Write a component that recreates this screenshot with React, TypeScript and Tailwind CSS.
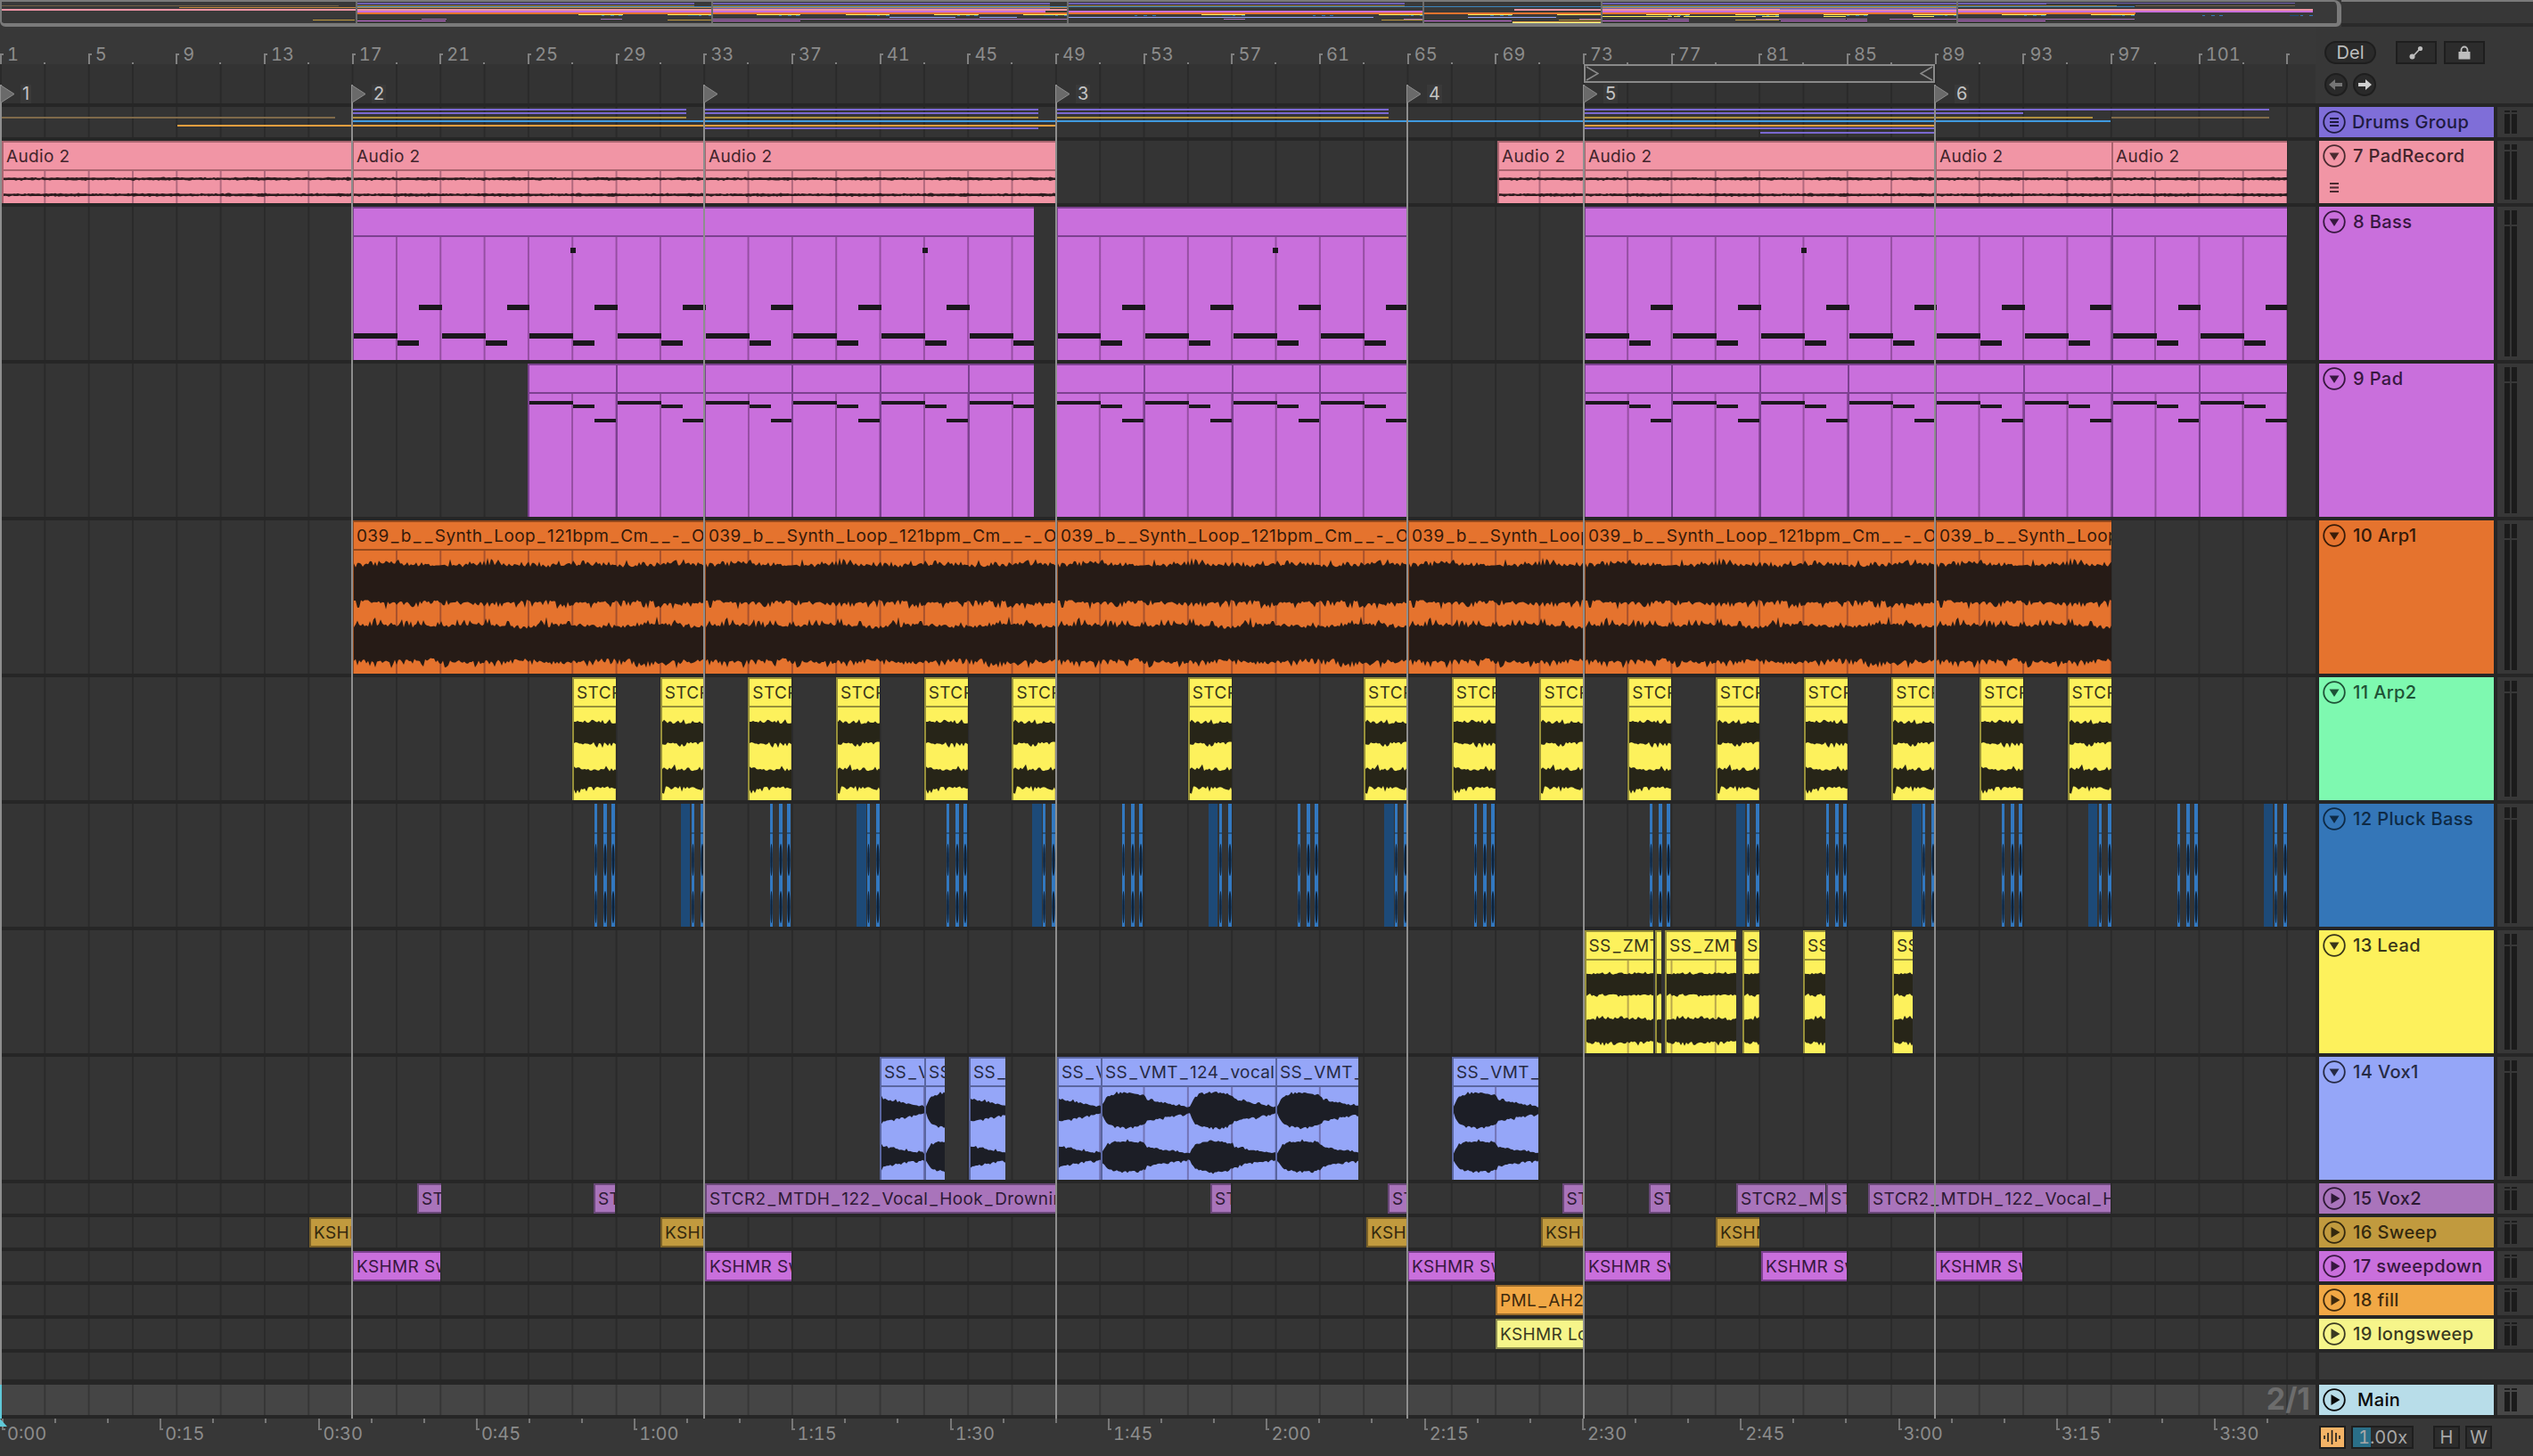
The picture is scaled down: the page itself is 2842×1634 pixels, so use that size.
import { ReactNode } from "react";

const FOUR = 98.68;
const LANE_LINES = "bg-[linear-gradient(90deg,#2a2a2a_2px,transparent_2px)] bg-[size:49.33px_100%]";
const CLIP_LINES = "bg-[linear-gradient(90deg,rgba(40,10,40,0.32)_2px,transparent_2px)] bg-[size:49.33px_100%]";

type Theme = { bg: string; edge: string; text: string; stroke: string; wave: string };

const pink: Theme = { bg: "bg-[#f195a5]", edge: "border-[#a9646f]", text: "text-[#41242b]", stroke: "#4a2a30", wave: "#2c1c1e" };
const purple: Theme = { bg: "bg-[#c96fdc]", edge: "border-[#7c4190]", text: "text-[#37173f]", stroke: "#37173f", wave: "#1b171d" };
const orange: Theme = { bg: "bg-[#e5732e]", edge: "border-[#964a1c]", text: "text-[#33190a]", stroke: "#3a1c08", wave: "#261b16" };
const green: Theme = { bg: "bg-[#7ef9b0]", edge: "border-[#4f9c6e]", text: "text-[#1e5236]", stroke: "#1e5236", wave: "#1c2a22" };
const yellow: Theme = { bg: "bg-[#fdf15c]", edge: "border-[#97903a]", text: "text-[#38351a]", stroke: "#38351a", wave: "#272518" };
const blue: Theme = { bg: "bg-[#3476b8]", edge: "border-[#23527f]", text: "text-[#0e2a45]", stroke: "#0e2a45", wave: "#0f2238" };
const peri: Theme = { bg: "bg-[#95a6f8]", edge: "border-[#5a66a0]", text: "text-[#262a44]", stroke: "#262a44", wave: "#1c1e26" };
const vox2: Theme = { bg: "bg-[#a974bb]", edge: "border-[#694878]", text: "text-[#2e1a35]", stroke: "#2e1a35", wave: "#000" };
const gold: Theme = { bg: "bg-[#c19a3e]", edge: "border-[#7a6128]", text: "text-[#33280e]", stroke: "#33280e", wave: "#000" };
const fill: Theme = { bg: "bg-[#f1a845]", edge: "border-[#9a6b2b]", text: "text-[#3e2a0e]", stroke: "#3e2a0e", wave: "#000" };
const pale: Theme = { bg: "bg-[#f6f58a]", edge: "border-[#8f8f50]", text: "text-[#3a3a22]", stroke: "#3a3a22", wave: "#000" };
const groupT: Theme = { bg: "bg-[#7f6ed8]", edge: "border-[#564a96]", text: "text-[#1e1a40]", stroke: "#1e1a40", wave: "#000" };
const mainT: Theme = { bg: "bg-[#b8dde9]", edge: "border-[#7c9aa4]", text: "text-[#0a0a0a]", stroke: "#0a0a0a", wave: "#000" };

function rng(seed: number) {
  let a = seed * 2654435761;
  return () => {
    a |= 0;
    a = (a + 0x6d2b79f5) | 0;
    let t = Math.imul(a ^ (a >>> 15), 1 | a);
    t = (t + Math.imul(t ^ (t >>> 7), 61 | t)) ^ t;
    return ((t ^ (t >>> 14)) >>> 0) / 4294967296;
  };
}

// one audio channel as a closed outline
function band(w: number, cy: number, half: (x: number) => number, spike: number, seed: number) {
  const r = rng(seed);
  const top: string[] = [];
  const bot: string[] = [];
  for (let x = 0; x <= w + 2; x += 2) {
    const h = half(x) + Math.sin(x * 0.06 + seed) * spike * 0.15;
    top.push(`${x} ${(cy - h - (r() - 0.5) * spike * 0.5 - r() ** 4 * spike).toFixed(1)}`);
    bot.unshift(`${x} ${(cy + h + (r() - 0.5) * spike * 0.5 + r() ** 4 * spike).toFixed(1)}`);
  }
  return `M${top.join("L")}L${bot.join("L")}Z`;
}

function Wave({ color, d }: { color: string; d: string }) {
  return (
    <svg className="absolute left-0 top-0 h-full w-full">
      <path d={d} fill={color} />
    </svg>
  );
}

type ClipData = { x: number; w: number; label?: string; draw?: (x: number, w: number) => ReactNode; dim?: boolean };

type Track = {
  name: string;
  t: Theme;
  head?: Theme;
  h: number;
  seg: number;
  icon: "down" | "play" | "group";
  clips: ClipData[];
  ovY: number;
  ovH: number;
  sliver?: boolean;
};

const pinkWave = (_x: number, w: number) => (
  <Wave color={pink.wave} d={band(w, 8.7, () => 1.2, 0.9, 3) + band(w, 26.7, () => 1.2, 0.9, 4)} />
);
const orangeWave = (_x: number, w: number) => (
  <Wave color={orange.wave} d={band(w, 37, () => 20.5, 7, 5) + band(w, 104, () => 19.5, 8, 6)} />
);
const arpWave = (x: number, w: number) => {
  const s = Math.round((x - 642) / FOUR) % 2;
  return <Wave color={yellow.wave} d={band(w, 28.5, () => 11, 5, 7 + s) + band(w, 80, () => 10.5, 7, 9 + s)} />;
};
const leadWave = (_x: number, w: number) => (
  <Wave color={yellow.wave} d={band(w, 26.5, () => 11.5, 4, 11) + band(w, 78.5, () => 12.5, 4, 12)} />
);
const voxHalf = (clipX: number, k: number) => (x: number) => {
  const p = (((clipX + x - 1037.6) % FOUR) + FOUR) % FOUR;
  if (p < 6) return (6 + p * 1.6) * k;
  if (p < 49) return (15 + 4 * Math.sin((Math.PI * (p - 6)) / 43)) * k;
  return (9 * (1 - (p - 49) / 49.7) + 3) * k;
};
const voxWave = (x: number, w: number) => (
  <Wave color={peri.wave} d={band(w, 26, voxHalf(x, 1), 2.6, 13) + band(w, 78, voxHalf(x, 0.88), 2.6, 14)} />
);

function bassNotes(x: number, w: number) {
  const out: ReactNode[] = [];
  for (let k = 0; k < 22; k++) {
    const g = 395 + k * FOUR;
    const parts = [
      [g, 49, 108],
      [g + 49, 24, 116],
      [g + 73, 25.7, 76],
    ];
    parts.forEach(([nx, nw, ny], i) => {
      if (nx + nw <= x || nx >= x + w) return;
      out.push(<Note key={`${k}-${i}`} x={nx - x} w={nw} y={ny} h={6} />);
    });
  }
  [638, 1033, 1426, 2019].forEach((nx) => {
    if (nx >= x && nx < x + w) out.push(<Note key={nx} x={nx - x} w={6} y={12} h={6} />);
  });
  return out;
}

const padNotes = () => (
  <>
    <Note x={0} w={49} y={8} h={4} />
    <Note x={49} w={24} y={12} h={4} />
    <Note x={73} w={25.7} y={28} h={4} />
  </>
);

function Note({ x, w, y, h }: { x: number; w: number; y: number; h: number }) {
  return <div className="absolute bg-[#1b171d]" style={{ left: x, width: w, top: y, height: h }} />;
}

const padClips: ClipData[] = [];
[592.2, 690.9, 789.6, 888.2, 986.9, 1085.6, 1184.4, 1283.1, 1381.8, 1480.4].forEach((x) => {
  padClips.push({ x, w: x === 1085.6 ? 74.4 : FOUR, draw: padNotes });
});
for (let k = 0; k < 8; k++) padClips.push({ x: 1776.5 + k * FOUR, w: FOUR, draw: padNotes });

const arpClips: ClipData[] = [0, 1, 2, 3, 4, 5, 7, 9, 10, 11, 12, 13, 14, 15, 16, 17].map((k) => ({
  x: 642 + k * FOUR,
  w: 49,
  label: "STCR2_MTDH",
  draw: arpWave,
}));

const pluckClips: ClipData[] = [];
for (let k = 0; k < 20; k++) {
  if (k === 11) continue;
  const g = 667 + k * FOUR;
  if (k % 2 === 0) {
    pluckClips.push({ x: g, w: 3 }, { x: g + 10, w: 4 }, { x: g + 19, w: 4 });
  } else {
    pluckClips.push({ x: g - 2, w: 10.5, dim: true }, { x: g + 10, w: 3 }, { x: g + 20, w: 4 });
  }
}

const synth = "039_b__Synth_Loop_121bpm_Cm__-_O";

const tracks: Track[] = [
  {
    name: "7 PadRecord", t: pink, h: 70, seg: 6, icon: "down", ovY: 10, ovH: 1.5,
    clips: [[2, 393], [395, 395], [790, 395], [1680, 97], [1777, 394], [2171, 198], [2369, 197]].map(([x, w]) => ({ x, w, label: "Audio 2", draw: pinkWave })),
  },
  {
    name: "8 Bass", t: purple, h: 172, seg: 16, icon: "down", ovY: 12, ovH: 1.5,
    clips: [[395, 765], [1185, 394], [1777, 592], [2369, 197]].map(([x, w]) => ({ x, w, draw: bassNotes })),
  },
  { name: "9 Pad", t: purple, h: 172, seg: 16, icon: "down", ovY: 13, ovH: 1, clips: padClips },
  {
    name: "10 Arp1", t: orange, h: 172, seg: 16, icon: "down", ovY: 14, ovH: 2,
    clips: [[395, 395], [790, 395], [1185, 394], [1579, 198], [1777, 394], [2171, 198]].map(([x, w]) => ({ x, w, label: synth, draw: orangeWave })),
  },
  { name: "11 Arp2", t: yellow, head: green, h: 138, seg: 12, icon: "down", ovY: 16, ovH: 1, clips: arpClips },
  { name: "12 Pluck Bass", t: blue, h: 138, seg: 12, icon: "down", ovY: 17, ovH: 1, clips: pluckClips, sliver: true },
  {
    name: "13 Lead", t: yellow, h: 138, seg: 12, icon: "down", ovY: 18, ovH: 1,
    clips: [
      { x: 1777.5, w: 77.5, label: "SS_ZMT_" },
      { x: 1857, w: 7 },
      { x: 1868, w: 80, label: "SS_ZMT_" },
      { x: 1955, w: 19, label: "SS" },
      { x: 2023, w: 25, label: "SS_" },
      { x: 2123, w: 23, label: "SS" },
    ].map((c) => ({ ...c, draw: leadWave })),
  },
  {
    name: "14 Vox1", t: peri, h: 138, seg: 12, icon: "down", ovY: 19, ovH: 1,
    clips: [
      { x: 987, w: 50, label: "SS_VMT" },
      { x: 1037, w: 23, label: "SS_V" },
      { x: 1087, w: 41, label: "SS_VMT" },
      { x: 1186, w: 49, label: "SS_VMT" },
      { x: 1235, w: 196, label: "SS_VMT_124_vocal_" },
      { x: 1431, w: 93, label: "SS_VMT_124" },
      { x: 1629, w: 97, label: "SS_VMT_124" },
    ].map((c) => ({ ...c, draw: voxWave })),
  },
  {
    name: "15 Vox2", t: vox2, h: 34, seg: 2, icon: "play", ovY: 20.5, ovH: 1,
    clips: [
      { x: 468, w: 27, label: "STCR2" },
      { x: 666, w: 24, label: "STCR2" },
      { x: 791, w: 394, label: "STCR2_MTDH_122_Vocal_Hook_Drowning" },
      { x: 1358, w: 23, label: "STCR2" },
      { x: 1557, w: 22, label: "STCR2" },
      { x: 1752.5, w: 24, label: "STCR2" },
      { x: 1850, w: 24, label: "STCR2" },
      { x: 1948, w: 100, label: "STCR2_MTDH" },
      { x: 2049, w: 23, label: "STCR2" },
      { x: 2096, w: 272, label: "STCR2_MTDH_122_Vocal_Hook_Drowning" },
    ],
  },
  {
    name: "16 Sweep", t: gold, h: 34, seg: 2, icon: "play", ovY: 21.5, ovH: 1,
    clips: [[347, 47], [741, 49], [1533, 46], [1729, 48], [1925, 49]].map(([x, w]) => ({ x, w, label: "KSHMR Sweep" })),
  },
  {
    name: "17 sweepdown", t: purple, h: 34, seg: 2, icon: "play", ovY: 22.5, ovH: 1,
    clips: [[395, 99], [791, 97], [1579, 98], [1777, 97], [1976, 96], [2171, 98]].map(([x, w]) => ({ x, w, label: "KSHMR Sweep" })),
  },
  { name: "18 fill", t: fill, h: 34, seg: 2, icon: "play", ovY: 23.5, ovH: 1, clips: [{ x: 1678, w: 99, label: "PML_AH2" }] },
  { name: "19 longsweep", t: pale, h: 34, seg: 2, icon: "play", ovY: 24.5, ovH: 1, clips: [{ x: 1678, w: 99, label: "KSHMR Loop" }] },
];

type GroupLine = { x: number; w: number; y: number; c: string };
const P = "bg-[#7a68d0]";
const G = "bg-[#b08f3e]";
const B = "bg-[#3f9ae0]";
const O = "bg-[#ef9f3f]";
const D = "bg-[#7f6a4a]";
const groupLines: GroupLine[] = [
  { x: 2, w: 374, y: 11, c: D },
  { x: 199, w: 986, y: 19.5, c: O },
  { x: 395, w: 1973, y: 15, c: B },
  { x: 1777, w: 393, y: 19.5, c: O },
  { x: 791, w: 374, y: 23, c: P },
  { x: 1777, w: 393, y: 23, c: P },
  { x: 1975, w: 195, y: 28, c: P },
  { x: 2171, w: 375, y: 2, c: P },
  { x: 2171, w: 99, y: 6, c: P },
  { x: 2171, w: 177, y: 11, c: G },
  { x: 2369, w: 177, y: 11, c: D },
];
[[395, 375], [791, 374], [1185, 373], [1777, 393]].forEach(([x, w]) => {
  groupLines.push({ x, w, y: 2, c: P }, { x, w, y: 6, c: P }, { x, w, y: 11, c: G });
});

function TrackIcon({ kind, color }: { kind: Track["icon"]; color: string }) {
  return (
    <svg width="26" height="26" viewBox="0 0 26 26" className="shrink-0">
      <circle cx="13" cy="13" r="11.8" fill="none" stroke={color} strokeWidth="1.8" />
      {kind === "down" && <path d="M7.5 9.5h11L13 18z" fill={color} />}
      {kind === "play" && <path d="M9.5 7l10 6-10 6z" fill={color} />}
      {kind === "group" && <path d="M8 8h10v2H8zM8 12h10v2H8zM8 16h10v2H8z" fill={color} />}
    </svg>
  );
}

function Meter({ seg, main }: { seg: number; main?: boolean }) {
  const bar = (
    <div className="flex h-full w-[6px] flex-col gap-[2px]">
      <div className="shrink-0 bg-[#1b1b1b]" style={{ height: seg }} />
      <div className="grow bg-[#1b1b1b]" />
    </div>
  );
  return (
    <div className={`flex w-[40px] gap-[2px] py-[4px] pl-[8px] ${main ? "bg-[#474747]" : "bg-[#373737]"}`}>
      {bar}
      {bar}
    </div>
  );
}

function TrackHead({ name, t, icon, gap = "gap-[8px]" }: { name: string; t: Theme; icon: Track["icon"]; gap?: string }) {
  return (
    <div className={`flex h-[34px] items-center pl-[4px] text-[20px] font-medium tracking-[0.02em] ${gap} ${t.text}`}>
      <TrackIcon kind={icon} color={t.stroke} />
      <span>{name}</span>
    </div>
  );
}

// underscores in the clip font run wider than Inter's
function ClipLabel({ text }: { text: string }) {
  return (
    <span>
      {text.split("_").map((part, i) => (
        <span key={i}>
          {i > 0 && <span className="mx-[2px]">_</span>}
          {part}
        </span>
      ))}
    </span>
  );
}

function Clip({ c, t, tall }: { c: ClipData; t: Theme; tall: boolean }) {
  return (
    <div className={`absolute inset-y-0 flex flex-col overflow-hidden ${t.bg}`} style={{ left: c.x, width: c.w }}>
      <div className={`flex h-[34px] shrink-0 items-center overflow-hidden whitespace-nowrap border-y-2 border-l-2 pl-[3px] pt-[1px] text-[19px] leading-none tracking-[0.02em] ${t.edge} ${t.text}`}>
        {c.label && <ClipLabel text={c.label} />}
      </div>
      {tall && (
        <div className={`relative grow overflow-hidden border-l-2 bg-origin-border ${CLIP_LINES} ${t.edge}`} style={{ backgroundPositionX: -c.x }}>
          {c.draw && c.draw(c.x, c.w)}
        </div>
      )}
    </div>
  );
}

function Sliver({ c }: { c: ClipData }) {
  return (
    <div className={`absolute inset-y-0 overflow-hidden ${c.dim ? "bg-[#1d4a78]" : "bg-[#3278c0]"}`} style={{ left: c.x, width: c.w }}>
      {!c.dim && (
        <svg className="absolute left-0 top-0 h-full w-full">
          <rect x="0" y="32" width={c.w} height="2" fill="#23527f" />
          <ellipse cx={c.w / 2} cy="63" rx={c.w * 0.42} ry="18" fill="#0f2238" />
          <ellipse cx={c.w / 2} cy="116" rx={c.w * 0.42} ry="18" fill="#0f2238" />
        </svg>
      )}
    </div>
  );
}

function TrackRow({ track }: { track: Track }) {
  const head = track.head ?? track.t;
  return (
    <div className="flex gap-[4px]" style={{ height: track.h }}>
      <div className={`relative w-[2598px] bg-[#343434] ${LANE_LINES}`}>
        {track.clips.map((c, i) =>
          track.sliver ? <Sliver key={i} c={c} /> : <Clip key={i} c={c} t={track.t} tall={track.h > 34} />
        )}
      </div>
      <div className={`relative w-[196px] ${head.bg}`}>
        <TrackHead name={track.name} t={head} icon={track.icon} />
        {track.name === "7 PadRecord" && (
          <svg width="10" height="12" viewBox="0 0 10 12" className="absolute left-[12px] top-[47px]">
            <path d="M0 0h10v2H0zM0 4.500h10v2H0zM0 9h10v2H0z" fill={head.stroke} />
          </svg>
        )}
      </div>
      <Meter seg={track.seg} />
    </div>
  );
}

function Overview() {
  const s = 1.0113;
  return (
    <div className="flex h-[30px] shrink-0">
      <div className="relative h-full w-[2627px] overflow-hidden rounded-b-[6px] rounded-r-[8px] border-2 border-b-4 border-r-[5px] border-[#7a7a7a] bg-[#393939]">
        {tracks.map((tr) =>
          tr.clips.map((c, i) => (
            <div key={i} className={`absolute ${c.dim ? "bg-[#1d4a78]" : tr.t.bg}`} style={{ left: c.x * s - 2, width: c.w * s, top: tr.ovY - 2, height: tr.ovH }} />
          ))
        )}
        {groupLines.map((l, i) => (
          <div key={i} className={`absolute opacity-80 ${l.c}`} style={{ left: l.x * s - 2, width: l.w * s, top: 1 + l.y * 0.24, height: 1 }} />
        ))}
        {[399, 798, 1197, 1596, 1796, 2195].map((x) => (
          <div key={x} className="absolute inset-y-0 w-[2px] bg-[#6c6c6c]" style={{ left: x - 2 }} />
        ))}
      </div>
      <div className="grow border-b-4 border-t-2 border-b-[#2a2a2a] border-t-[#7a7a7a]" />
    </div>
  );
}

function Ruler() {
  const cells = [];
  for (let k = 0; k < 27; k++) {
    const n = 1 + k * 4;
    cells.push(
      <div key={k} className="relative h-full w-[98.68px] shrink-0">
        <div className="absolute bottom-0 left-0 h-[12px] w-[4px] border-l-2 border-t-2 border-[#808080]" />
        <div className="absolute bottom-0 left-[49px] h-[2px] w-[2px] bg-[#808080]" />
        {k < 26 && <span className="absolute left-[8px] top-[21px] text-[20px] leading-[20px] tabular-nums text-[#8c8c8c]">{n}</span>}
      </div>
    );
  }
  return <div className="flex h-[42px] w-[2598px] overflow-hidden bg-[#383838]">{cells}</div>;
}

function Locator({ x, label }: { x: number; label?: string }) {
  return (
    <div className="pointer-events-none absolute bottom-[42px] top-[95px] z-10 w-[2px] bg-[#8e8e8e]" style={{ left: x }}>
      <svg width="17" height="21" viewBox="0 0 17 21" className="absolute left-0 top-0">
        <path d="M0.500 0.500L16 10.500 0.500 20.500z" fill="#6a6a6a" stroke="#8e8e8e" />
      </svg>
      {label && <span className="absolute left-[23px] top-0 bg-[#393939] px-[2px] text-[20px] leading-[21px] text-[#c4c4c4]">{label}</span>}
    </div>
  );
}

function TopControls() {
  return (
    <div className="flex w-[244px] flex-col gap-[10px] bg-[#373737] pl-[10px] pt-[16px]">
      <div className="flex h-[26px]">
        <div className="flex w-[58px] items-center justify-center rounded-full border-2 border-[#1e1e1e] bg-[#2a2a2a] text-[20px] text-[#bdbdbd]">Del</div>
        <div className="ml-[22px] flex w-[46px] items-center justify-center border-2 border-[#1e1e1e] bg-[#2c2c2c]">
          <svg width="16" height="16" viewBox="0 0 16 16">
            <path d="M4 12.500L12.500 3.500" stroke="#bdbdbd" strokeWidth="1.8" />
            <circle cx="3.500" cy="12.500" r="3" fill="#bdbdbd" />
            <circle cx="12.500" cy="3.500" r="2.600" fill="#bdbdbd" />
          </svg>
        </div>
        <div className="ml-[8px] flex w-[46px] items-center justify-center border-2 border-[#1e1e1e] bg-[#2c2c2c]">
          <svg width="16" height="16" viewBox="0 0 16 16">
            <path d="M4.500 7V5a3.500 3.500 0 0 1 7 0v2" fill="none" stroke="#bdbdbd" strokeWidth="1.8" />
            <rect x="1.500" y="7" width="13" height="8.500" fill="#bdbdbd" />
          </svg>
        </div>
      </div>
      <div className="flex h-[26px] gap-[6px]">
        <div className="flex w-[26px] items-center justify-center rounded-full border-2 border-[#1e1e1e] bg-[#2a2a2a]">
          <svg width="16" height="14" viewBox="0 0 16 14"><path d="M0 7l7-6v4h8v4H7v4z" fill="#757575" /></svg>
        </div>
        <div className="flex w-[26px] items-center justify-center rounded-full border-2 border-[#1e1e1e] bg-[#2a2a2a]">
          <svg width="16" height="14" viewBox="0 0 16 14"><path d="M16 7L9 1v4H1v4h8v4z" fill="#d0d0d0" /></svg>
        </div>
      </div>
    </div>
  );
}

function BottomBar() {
  const cells = [];
  for (let k = 0; k < 15; k++) {
    const m = Math.floor((k * 15) / 60);
    const sec = (k * 15) % 60;
    cells.push(
      <div key={k} className="relative h-full w-[177.3px] shrink-0">
        <div className="absolute left-0 top-0 h-[13px] w-[4px] border-b-2 border-l-2 border-[#777777]" />
        <div className="absolute left-[59px] top-0 h-[5px] w-[2px] bg-[#777777]" />
        <div className="absolute left-[118px] top-0 h-[5px] w-[2px] bg-[#777777]" />
        <span className="absolute left-[6px] top-[6px] text-[20px] leading-[22px] tabular-nums text-[#8c8c8c]">{`${m}:${sec === 0 ? "00" : sec}`}</span>
      </div>
    );
  }
  return (
    <div className="flex h-[42px] grow bg-[#373737]">
      <div className="relative flex w-[2602px] overflow-hidden rounded-bl-[8px] pl-[2px]">
        {cells}
        <svg width="8" height="9" viewBox="0 0 8 9" className="absolute left-0 top-0">
          <path d="M0 0l8 9H0z" fill="#5fc9d9" />
        </svg>
      </div>
      <div className="flex items-start pt-[8px]">
        <div className="flex h-[26px] w-[30px] items-center justify-center border-2 border-[#1e1e1e] bg-[#f3b366]">
          <svg width="20" height="16" viewBox="0 0 20 16">
            <path d="M1 6v4M5 3v10M9.500 0v16M14 3v10M18 6v4" stroke="#1b1b1b" strokeWidth="1.6" />
          </svg>
        </div>
        <div className="relative ml-[6px] flex h-[26px] w-[70px] items-center border-2 border-[#1e1e1e] bg-[#2c2c2c] pl-[6px] text-[20px] tabular-nums text-[#a8a8a8]">
          <div className="absolute inset-y-0 left-0 w-[20px] bg-[#2a6f88]" />
          <span className="relative">1.00x</span>
        </div>
        <div className="ml-[22px] flex h-[26px] w-[30px] items-center justify-center border-2 border-[#1e1e1e] bg-[#2c2c2c] text-[20px] text-[#a8a8a8]">H</div>
        <div className="ml-[6px] flex h-[26px] w-[30px] items-center justify-center border-2 border-[#1e1e1e] bg-[#2c2c2c] text-[20px] text-[#a8a8a8]">W</div>
      </div>
    </div>
  );
}

export default function App() {
  return (
    <div className="relative flex h-[1634px] w-[2842px] flex-col overflow-hidden bg-[#373737] font-['Inter',sans-serif]">
      <Overview />

      <div className="flex h-[86px] shrink-0 bg-[#373737]">
        <div className="relative w-[2598px]">
          <Ruler />
          <div className={`relative h-[44px] bg-[#333333] ${LANE_LINES}`}>
            <div className="absolute left-[1776.5px] top-0 h-[21px] w-[394px] border-2 border-[#8a8a8a] bg-[#353535]">
              <svg width="15" height="17" viewBox="0 0 15 17" className="absolute left-0 top-0">
                <path d="M1 1l13 7.500L1 16" fill="none" stroke="#8a8a8a" strokeWidth="1.6" />
              </svg>
              <svg width="15" height="17" viewBox="0 0 15 17" className="absolute right-0 top-0">
                <path d="M14 1L1 8.500 14 16" fill="none" stroke="#8a8a8a" strokeWidth="1.6" />
              </svg>
            </div>
          </div>
        </div>
        <TopControls />
      </div>

      <div className="flex grow flex-col gap-[4px] bg-[#262626] pt-[4px]">
        <div className="flex h-[34px] gap-[4px]">
          <div className={`relative w-[2598px] bg-[#343434] ${LANE_LINES}`}>
            {groupLines.map((l, i) => (
              <div key={i} className={`absolute h-[2px] ${l.c}`} style={{ left: l.x, width: l.w, top: l.y }} />
            ))}
          </div>
          <div className={`w-[196px] ${groupT.bg}`}>
            <TrackHead name="Drums Group" t={groupT} icon="group" gap="gap-[7px]" />
          </div>
          <Meter seg={2} />
        </div>

        {tracks.map((tr) => (
          <TrackRow key={tr.name} track={tr} />
        ))}

        <div className="flex h-[30px] gap-[4px]">
          <div className={`w-[2598px] bg-[#343434] ${LANE_LINES}`} />
          <div className="grow bg-[#373737]" />
        </div>

        <div className="mt-[2px] flex h-[34px] gap-[4px]">
          <div className="relative w-[2598px] bg-[#454545] bg-[linear-gradient(90deg,#363636_2px,transparent_2px)] bg-[size:49.33px_100%]">
            <span className="absolute right-[6px] top-[-2px] text-[34px] font-bold leading-[36px] text-[#6c6c6c]">2/1</span>
          </div>
          <div className={`w-[196px] ${mainT.bg}`}>
            <TrackHead name="Main" t={mainT} icon="play" gap="gap-[13px]" />
          </div>
          <Meter seg={2} main />
        </div>

        <BottomBar />
      </div>

      <Locator x={0} label="1" />
      <Locator x={394} label="2" />
      <Locator x={789} />
      <Locator x={1184} label="3" />
      <Locator x={1578} label="4" />
      <Locator x={1776} label="5" />
      <Locator x={2170} label="6" />
      <div className="absolute left-0 top-[1554px] z-20 h-[38px] w-[2px] bg-[#5fc9d9]" />
    </div>
  );
}
